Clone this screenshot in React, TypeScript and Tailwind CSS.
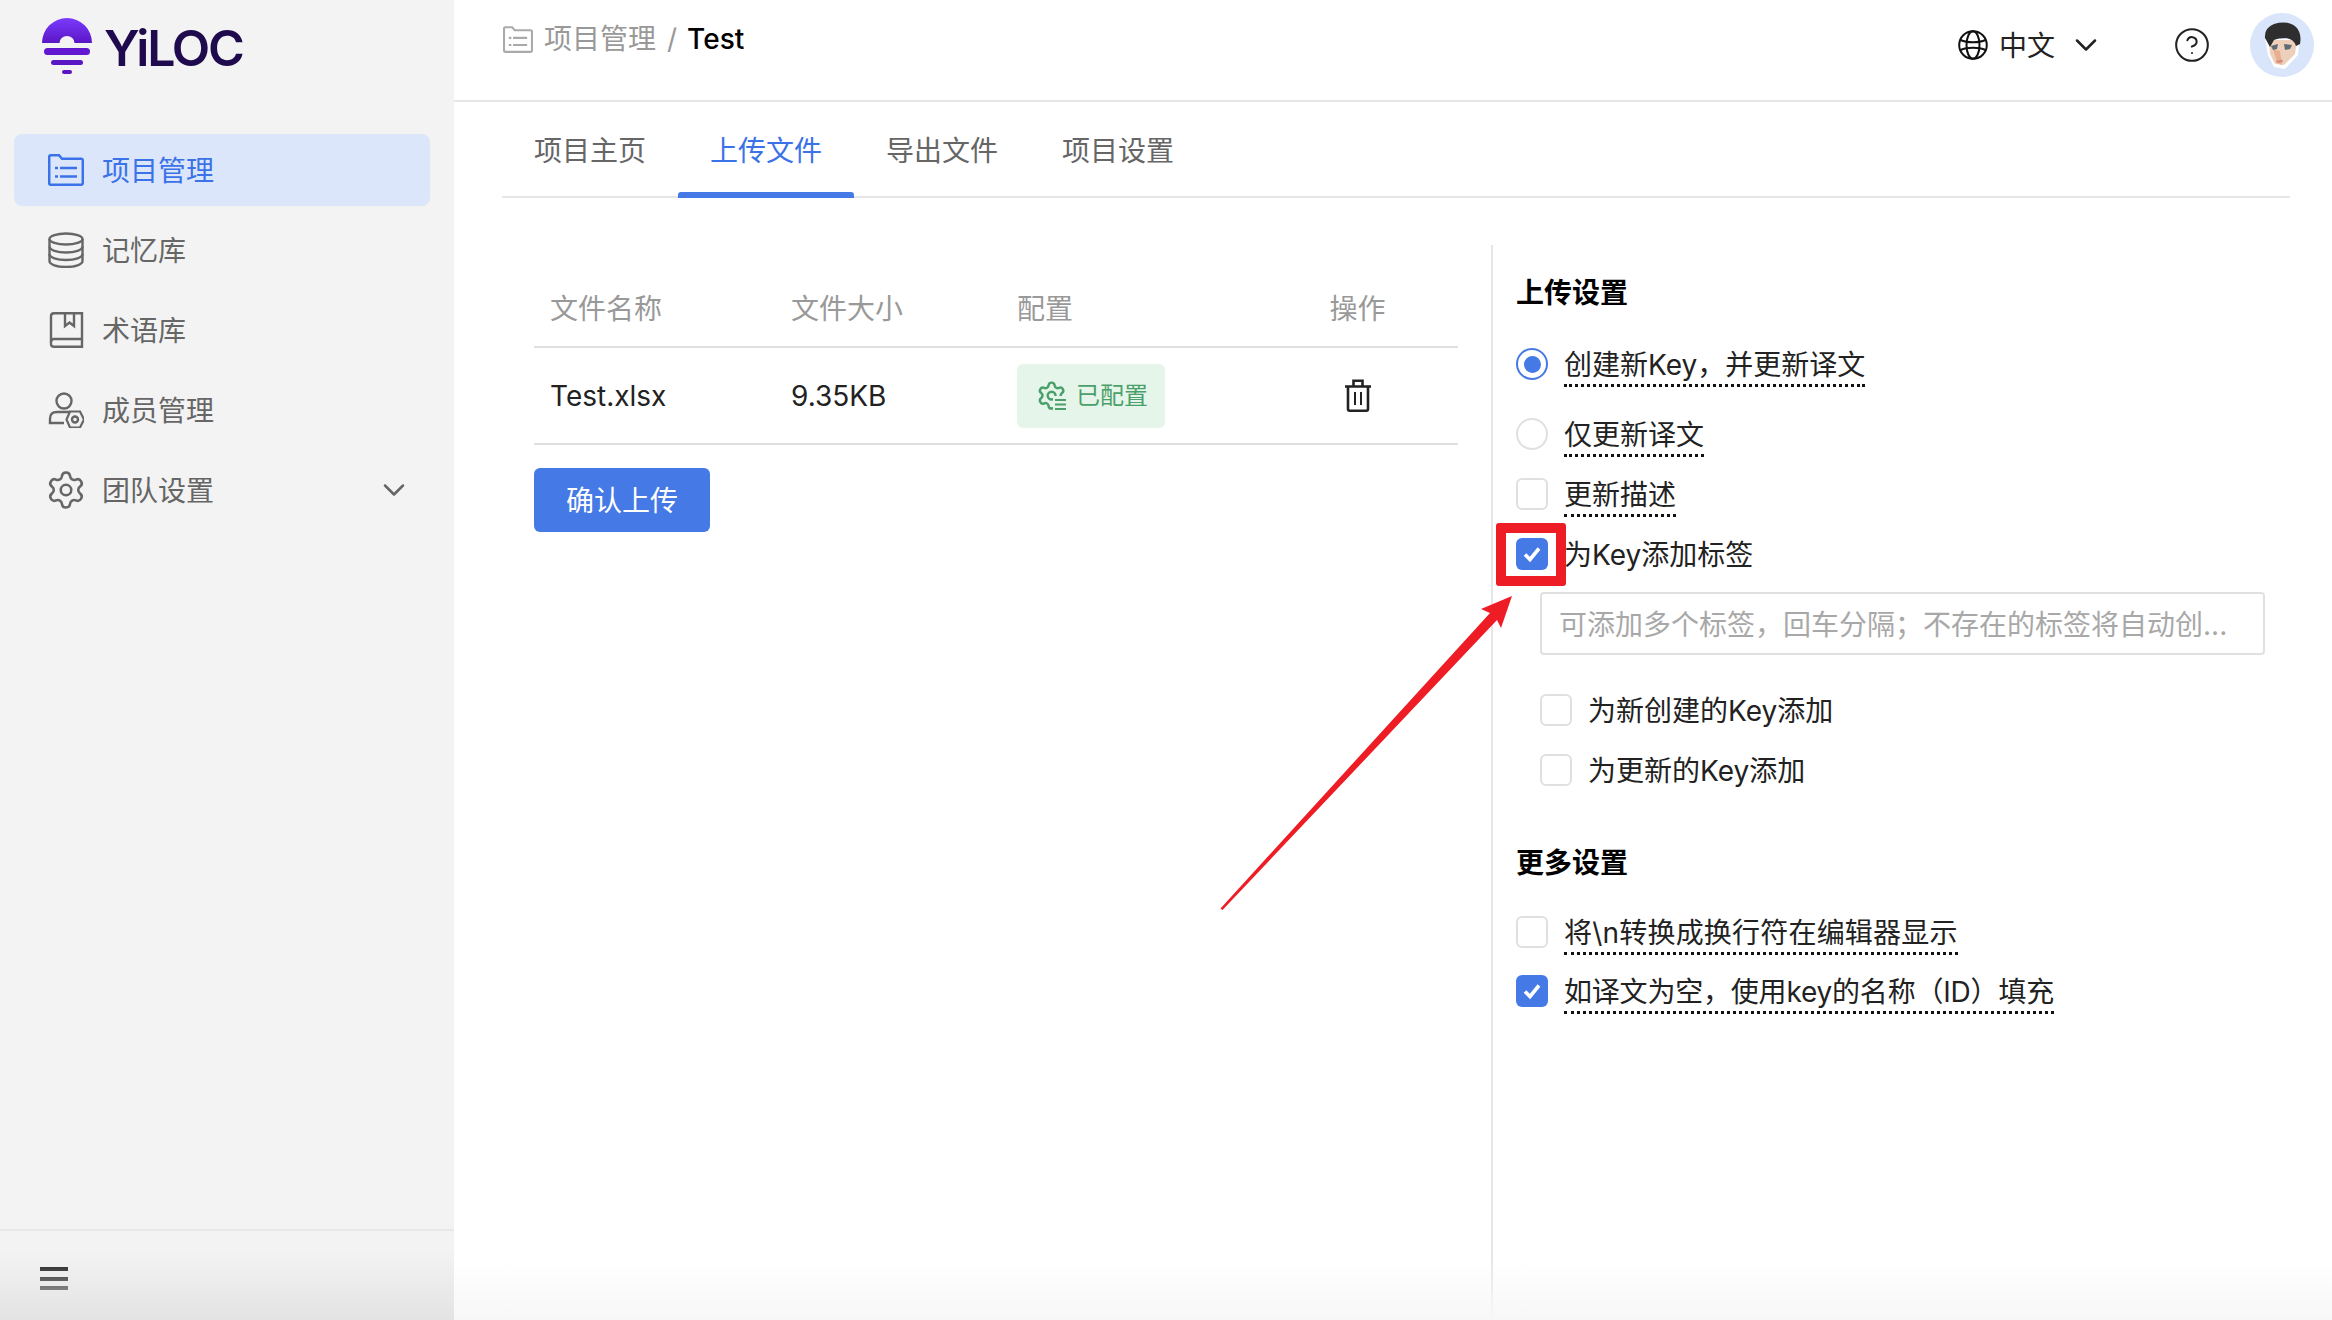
import { ChevronDown, Settings, CircleHelp } from "lucide-react";

const FolderList = ({ className }: { className: string }) => (
  <svg viewBox="0 0 36 32" fill="none" stroke="currentColor" strokeWidth="2.5" className={className}>
    <path d="M1.2 2.8Q1.2 1.2 2.8 1.2H11L14 4.8H33Q34.8 4.8 34.8 6.6V29Q34.8 30.8 33 30.8H3Q1.2 30.8 1.2 29Z" />
    <path d="M12 14H29M12 22.5H29M7 14H10M7 22.5H10" />
  </svg>
);

const Database = () => (
  <svg viewBox="0 0 36 36" fill="none" stroke="currentColor" strokeWidth="2.4" className="w-[36px] h-[36px]">
    <ellipse cx="18" cy="7" rx="16.5" ry="5.5" />
    <path d="M1.5 7V29C1.5 32.5 9 35 18 35S34.5 32.5 34.5 29V7" />
    <path d="M1.5 14.5C1.5 18 9 20.5 18 20.5S34.5 18 34.5 14.5" />
    <path d="M1.5 22C1.5 25.5 9 28 18 28S34.5 25.5 34.5 22" />
  </svg>
);

const Book = () => (
  <svg viewBox="0 0 36 36" fill="none" stroke="currentColor" strokeWidth="2.4" className="w-[36px] h-[36px]">
    <path d="M6 1.2H34V34.8H6Q3 34.8 3 32V4Q3 1.2 6 1.2Z" />
    <path d="M3 30Q3 27 6 27H34" />
    <path d="M17 1.2V14L21.5 10.5L26 14V1.2" />
  </svg>
);

const UserGear = () => (
  <svg viewBox="0 0 36 36" fill="none" stroke="currentColor" strokeWidth="2.4" className="w-[36px] h-[36px]">
    <circle cx="16" cy="9" r="7.5" />
    <path d="M22 20H9Q2 20 2 27V31H16" />
    <path d="M22 19.5H32L36 27.5L32 35.5H22L18.5 27.5Z" strokeWidth="2.2" />
    <circle cx="27" cy="27.5" r="3" />
  </svg>
);

const Globe = () => (
  <svg viewBox="0 0 30 30" fill="none" stroke="#111111" strokeWidth="2" className="w-[30px] h-[30px]">
    <circle cx="15" cy="15" r="13.8" />
    <ellipse cx="15" cy="15" rx="6.5" ry="13.8" />
    <path d="M2.5 10C9 13 21 13 27.5 10M2.5 20C9 17 21 17 27.5 20" />
  </svg>
);

const GearBadge = () => (
  <svg viewBox="0 0 30 34" fill="none" className="w-[30px] h-[34px]">
    <g stroke="#4aa06a" strokeWidth="1.9" transform="translate(-1 1) scale(1.3)">
      <path d="M9.671 4.136a2.34 2.34 0 0 1 4.659 0 2.34 2.34 0 0 0 3.319 1.915 2.34 2.34 0 0 1 2.33 4.033 2.34 2.34 0 0 0 0 3.831 2.34 2.34 0 0 1-2.33 4.033 2.34 2.34 0 0 0-3.319 1.915 2.34 2.34 0 0 1-4.659 0 2.34 2.34 0 0 0-3.32-1.915 2.34 2.34 0 0 1-2.33-4.033 2.34 2.34 0 0 0 0-3.831A2.34 2.34 0 0 1 6.35 6.051a2.34 2.34 0 0 0 3.319-1.915" />
      <circle cx="12" cy="12" r="3" />
    </g>
    <rect x="16" y="17" width="14" height="17" fill="#e6f5e9" />
    <path d="M18 21H29M18 25.5H29M18 30H29" stroke="#4aa06a" strokeWidth="2" />
  </svg>
);

const Trash = () => (
  <svg viewBox="0 0 28 33" fill="none" stroke="#222222" strokeWidth="2.6" className="w-[28px] h-[33px]">
    <path d="M1 7.5H27M9.5 7.5V1.8H18.5V7.5" />
    <path d="M4 7.5V30Q4 31.7 5.7 31.7H22.3Q24 31.7 24 30V7.5" />
    <path d="M11 13V26M17 13V26" strokeWidth="2" />
  </svg>
);

const Face = () => (
  <svg viewBox="0 0 64 64" className="w-[64px] h-[64px] blur-[0.6px]">
    <circle cx="32" cy="32" r="32" fill="#d9e5fa" />
    <path d="M15 26L50 26L48 42L35 56L24 54L18 42Z" fill="#ffffff" />
    <path d="M19 27L47 27L45 41L34 52L25 51L20 41Z" fill="#ecd0bc" />
    <path d="M23 36L27 50L32 52L30 38Z" fill="#e8b08e" />
    <path d="M15 25Q14 15 24 11Q38 7 46 14Q52 20 50 31L46 33Q44 26 36 25Q28 25 24 27L20 34Z" fill="#2e2e2e" />
    <path d="M21 33L28 31L27 36L23 37ZM34 31L42 32L40 36L35 37Z" fill="#5f6a72" />
    <path d="M26 48L32 46.5L33 49L27 50Z" fill="#d98a80" />
  </svg>
);

const Check = () => (
  <svg viewBox="0 0 32 32" fill="none" stroke="#ffffff" strokeWidth="3.6" className="w-[32px] h-[32px]">
    <path d="M9 16.5L14 21.5L23 10.5" />
  </svg>
);

const Box = ({ on }: { on?: boolean }) =>
  on ? (
    <div className="w-[32px] h-[32px] mt-[4px] shrink-0 rounded-[6px] bg-[#4479e6]">
      <Check />
    </div>
  ) : (
    <div className="w-[32px] h-[32px] mt-[4px] shrink-0 rounded-[6px] border-2 border-[#e0e0e0] bg-white" />
  );

const Radio = ({ on }: { on?: boolean }) =>
  on ? (
    <div className="w-[32px] h-[32px] mt-[4px] shrink-0 rounded-full border-2 border-[#4479e6] bg-white flex items-center justify-center">
      <div className="w-[17px] h-[17px] rounded-full bg-[#4479e6]" />
    </div>
  ) : (
    <div className="w-[32px] h-[32px] mt-[4px] shrink-0 rounded-full border-2 border-[#e0e0e0] bg-white" />
  );

const Dotted = ({ children, className }: { children: string; className?: string }) => (
  <span className={"leading-[42px] h-[43px] border-b-[3px] border-dotted border-[#111111] " + (className ?? "")}>{children}</span>
);

const Nav = ({ icon, label, active, arrow }: { icon: React.ReactNode; label: string; active?: boolean; arrow?: boolean }) => (
  <div
    className={
      active
        ? "h-[72px] mx-[14px] w-[416px] rounded-[8px] bg-[#dbe6fa] text-[#3b72e8] flex items-center pl-[34px] gap-[18px]"
        : "h-[72px] mx-[14px] w-[416px] rounded-[8px] text-[#666666] flex items-center pl-[34px] gap-[18px]"
    }
  >
    <div className="w-[36px] flex justify-center">{icon}</div>
    <span className="flex-1 pt-[1px]">{label}</span>
    {arrow && <ChevronDown size={36} strokeWidth={1.7} className="mr-[18px]" />}
  </div>
);

export default function App() {
  return (
    <div className="relative w-[2332px] h-[1320px] overflow-hidden flex bg-white text-[28px] leading-[40px] text-[#222222] font-['Inter','Noto_Sans_CJK_SC',sans-serif]">
      <aside className="relative w-[454px] h-full bg-[#f3f3f3] flex flex-col shrink-0">
        <div className="h-[134px] pt-[18px] pl-[42px] flex items-start">
          <svg viewBox="0 0 50 56" className="w-[50px] h-[56px] shrink-0">
            <defs>
              <linearGradient id="sun" x1="0" y1="0" x2="0" y2="1">
                <stop offset="0" stopColor="#7b3bff" />
                <stop offset="1" stopColor="#5a16c4" />
              </linearGradient>
            </defs>
            <path d="M0 25A25 25 0 0 1 50 25H32.5A7.5 7 0 0 0 17.5 25Z" fill="url(#sun)" />
            <rect x="2" y="30" width="46" height="7" rx="3.5" fill="#6118d0" />
            <rect x="9" y="42" width="32" height="5" rx="2.5" fill="#5a16c4" />
            <rect x="20" y="52" width="10" height="4" rx="2" fill="#5a16c4" />
          </svg>
          <span className="ml-[12px] mt-[0px] text-[50px] leading-[60px] font-semibold tracking-[-2.2px] text-[#1f0a4e]">YiLOC</span>
        </div>
        <nav className="flex flex-col gap-[8px]">
          <Nav active label="项目管理" icon={<FolderList className="w-[36px] h-[32px]" />} />
          <Nav label="记忆库" icon={<Database />} />
          <Nav label="术语库" icon={<Book />} />
          <Nav label="成员管理" icon={<UserGear />} />
          <Nav label="团队设置" arrow icon={<Settings size={42} strokeWidth={1.45} className="shrink-0" />} />
        </nav>
        <div className="mt-auto h-[91px] border-t-2 border-[#e8e8e8] pl-[40px] pt-[36px] flex flex-col gap-[5.7px]">
          <div className="w-[28px] h-[4px] bg-black" />
          <div className="w-[28px] h-[4px] bg-black" />
          <div className="w-[28px] h-[4px] bg-black" />
        </div>
        <div className="absolute left-0 right-0 bottom-0 h-[70px] bg-gradient-to-b from-transparent to-[#e3e3e3] pointer-events-none" />
      </aside>

      <main className="relative flex-1 h-full flex flex-col">
        <header className="h-[102px] shrink-0 border-b-2 border-[#e6e6e6] pl-[49px] pr-[18px] flex items-start">
          <div className="flex items-center mt-[19px]">
            <FolderList className="w-[30px] h-[27px] text-[#aaaaaa]" />
            <span className="ml-[11px] text-[#999999]">项目管理</span>
            <span className="ml-[11px] text-[#999999]">/</span>
            <span className="ml-[10px] font-medium text-black">Test</span>
          </div>
          <div className="ml-auto mt-[13px] flex items-center h-[64px]">
            <Globe />
            <span className="ml-[11px] pt-[1px]">中文</span>
            <ChevronDown size={36} strokeWidth={1.7} className="ml-[13px]" />
            <CircleHelp size={38} strokeWidth={1.3} className="ml-[69px]" />
            <div className="ml-[39px]">
              <Face />
            </div>
          </div>
        </header>

        <div className="ml-[48px] mr-[42px] h-[96px] shrink-0 border-b-2 border-[#e6e6e6] flex text-[#666666]">
          <div className="w-[176px] pt-[29px] text-center">项目主页</div>
          <div className="relative w-[176px] pt-[29px] text-center text-[#3b72e8]">
            上传文件
            <div className="absolute left-0 right-0 bottom-[-2px] h-[6px] rounded-t-[3px] bg-[#4479e6]" />
          </div>
          <div className="w-[176px] pt-[29px] text-center">导出文件</div>
          <div className="w-[176px] pt-[29px] text-center">项目设置</div>
        </div>

        <div className="flex-1 flex mt-[47px] min-h-0">
          <section className="w-[1037px] shrink-0 pl-[80px] pr-[33px] pt-[25px]">
            <div className="grid grid-cols-[241px_226px_258px_199px] h-[78px] pt-[2px] items-center border-b-2 border-[#e0e0e0] text-[#999999]">
              <div className="pl-[16px]">文件名称</div>
              <div className="pl-[16px]">文件大小</div>
              <div className="pl-[16px]">配置</div>
              <div className="text-center pr-[2px]">操作</div>
            </div>
            <div className="grid grid-cols-[241px_226px_258px_199px] h-[97px] items-center border-b-2 border-[#e0e0e0]">
              <div className="pl-[16px]">Test.xlsx</div>
              <div className="pl-[16px]">9.35KB</div>
              <div className="pl-[16px]">
                <div className="w-[148px] h-[64px] rounded-[6px] bg-[#e6f5e9] text-[#4aa06a] text-[24px] flex items-center pl-[20px] gap-[9px]">
                  <GearBadge />
                  <span>已配置</span>
                </div>
              </div>
              <div className="flex justify-center pr-[2px]">
                <Trash />
              </div>
            </div>
            <button className="mt-[23px] w-[176px] h-[64px] pt-[2px] rounded-[6px] bg-[#4479e6] text-white">确认上传</button>
          </section>

          <section className="flex-1 border-l-2 border-[#e6e6e6] pl-[23px] pt-[27px]">
            <h2 className="font-semibold text-black h-[40px] leading-[42px]">上传设置</h2>
            <div className="flex items-start gap-[16px] mt-[32px] h-[40px]">
              <Radio on />
              <Dotted>创建新Key，并更新译文</Dotted>
            </div>
            <div className="flex items-start gap-[16px] mt-[30px] h-[40px]">
              <Radio />
              <Dotted>仅更新译文</Dotted>
            </div>
            <div className="flex items-start gap-[16px] mt-[20px] h-[40px]">
              <Box />
              <Dotted>更新描述</Dotted>
            </div>
            <div className="flex items-start gap-[16px] mt-[20px] h-[40px]">
              <Box on />
              <span className="leading-[42px]">为Key添加标签</span>
            </div>
            <div className="ml-[24px] mt-[18px] w-[725px] h-[63px] pt-[2px] rounded-[4px] border-2 border-[#e0e0e0] flex items-center pl-[17px] text-[#a8a8a8]">
              可添加多个标签，回车分隔；不存在的标签将自动创...
            </div>
            <div className="ml-[24px] flex items-start gap-[16px] mt-[35px] h-[40px]">
              <Box />
              <span className="leading-[42px]">为新创建的Key添加</span>
            </div>
            <div className="ml-[24px] flex items-start gap-[16px] mt-[20px] h-[40px]">
              <Box />
              <span className="leading-[42px]">为更新的Key添加</span>
            </div>
            <h2 className="font-semibold text-black h-[40px] leading-[42px] mt-[52px]">更多设置</h2>
            <div className="flex items-start gap-[16px] mt-[30px] h-[40px]">
              <Box />
              <Dotted className="tracking-[0.2px]">将\n转换成换行符在编辑器显示</Dotted>
            </div>
            <div className="flex items-start gap-[16px] mt-[19px] h-[40px]">
              <Box on />
              <Dotted className="tracking-[-0.2px]">如译文为空，使用key的名称（ID）填充</Dotted>
            </div>
          </section>
        </div>
        <div className="absolute left-0 right-0 bottom-0 h-[60px] bg-gradient-to-b from-transparent to-[#f7f7f7] pointer-events-none" />
      </main>

      <div className="absolute left-[1496px] top-[523px] w-[70px] h-[63px] rounded-[3px] border-[10px] border-[#ee1c25] pointer-events-none" />
      <svg viewBox="0 0 2332 1320" className="absolute left-0 top-0 w-[2332px] h-[1320px] pointer-events-none">
        <polygon points="1512,596 1481,609 1490,613 1220.5,908.5 1222.5,910 1497,620 1501,628" fill="#ee1c25" />
      </svg>
    </div>
  );
}
